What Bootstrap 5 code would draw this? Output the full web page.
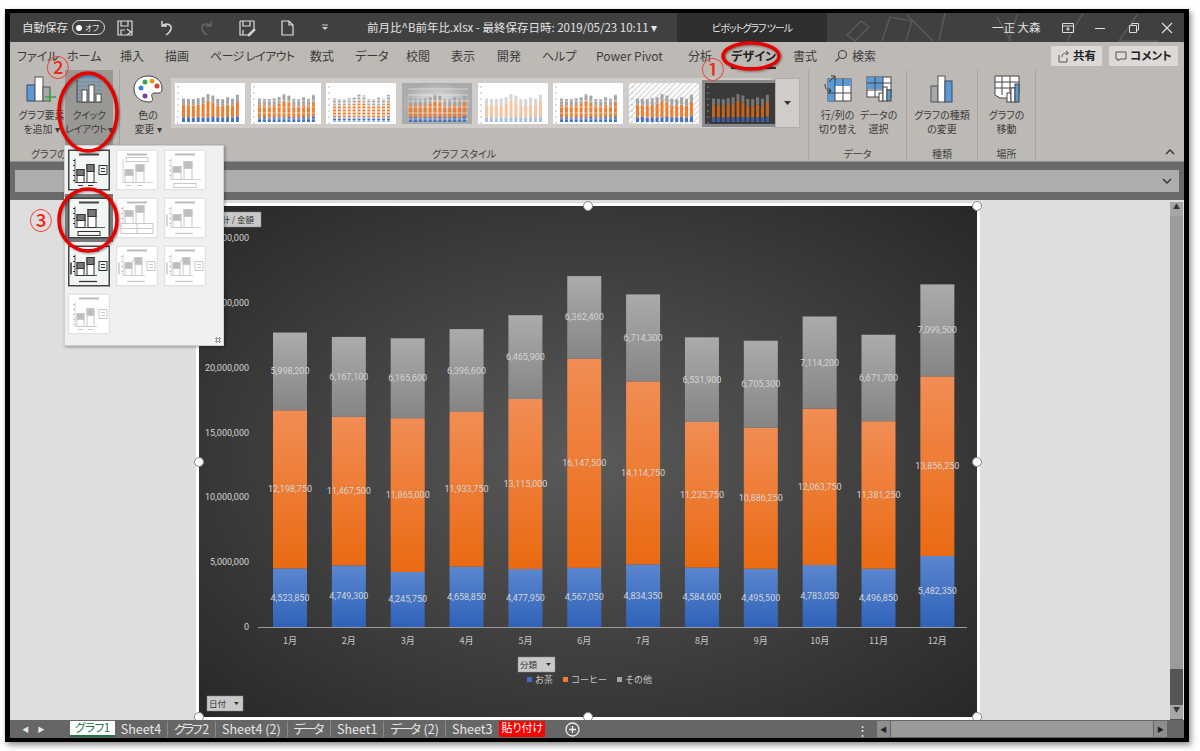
<!DOCTYPE html>
<html lang="ja">
<head>
<meta charset="UTF-8">
<title>前月比^B前年比.xlsx</title>
<link href="https://cdn.jsdelivr.net/npm/bootstrap@5.3.3/dist/css/bootstrap.min.css" rel="stylesheet">
<style>
html, body { height: 751px; overflow: hidden; background: #fff; }
body { font-family: "Noto Sans CJK JP", "Noto Sans", sans-serif; font-feature-settings: "palt"; font-size: 12px; line-height: 1.2; }
.xl-win { width: 1184px; height: 733px; margin: 9px 0 0 5px; border: solid #000; border-width: 4px 5px; box-shadow: 2px 3px 6px rgba(0,0,0,.45); position: relative; }
.xl-title { height: 29px; background: #404040; color: #e4e4e4; font-size: 11.5px; position: relative; }
.xl-title svg { display: block; }
.xl-ctx { width: 150px; height: 29px; background: #2e2e2e; font-size: 10px; letter-spacing: -1px; margin-left: 17px; }
.xl-deco { position: absolute; left: 817px; top: 0; opacity: .13; }
.xl-toggle { width: 33px; height: 15px; border: 1px solid #ddd; border-radius: 8px; font-size: 8px; padding-left: 3px; gap: 3px; }
.xl-toggle i { width: 6px; height: 6px; background: #fff; border-radius: 50%; display: block; }
.xl-tabs { height: 28px; background: #bdb9b5; color: #3c3c3c; font-size: 12px; padding-left: 7px; position: relative; }
.xl-tab-on { font-weight: 700; color: #222; position: relative; }
.xl-tab-on::after { content: ""; position: absolute; left: 0; right: 0; bottom: -5px; height: 2px; background: #333; }
.xl-tight { letter-spacing: -.7px; white-space: nowrap; }
.xl-share { height: 20px; background: #dcd9d6; color: #222; font-weight: 700; font-size: 11.5px; border-radius: 1px; gap: 3px; padding: 0 6px; }
.xl-ribbon { height: 92px; background: #bdb9b5; border-bottom: 1px solid #8f8f8f; color: #3c3c3c; }
.xl-group { border-right: 1px solid #a9a6a2; margin-bottom: 1px; position: relative; }
.xl-glabel { height: 16px; padding-top: 3px; font-size: 10px; color: #444; text-align: center; white-space: nowrap; }
.xl-gbody { height: 75px; }
.xl-btn { font-size: 10px; line-height: 14px; text-align: center; padding-top: 5px; height: 75px; color: #3c3c3c; white-space: nowrap; }
.xl-btn svg { display: block; margin: 0 auto 5px; height: 28px; }
.xl-btn-hot { background: #9a9894; letter-spacing: -.4px; }
.xl-gallery { margin-top: 8px; height: 50px; background: #cfccc9; padding: 5px 2px 4px 4px; gap: 5.7px; width: 600px; }
.xl-gallery svg { display: block; }
.xl-more { width: 25px; height: 50px; margin: 8px 0 0 4px; background: #cfccc9; border: 1px solid #b0adaa; }
.xl-fband { height: 38px; background: #6a6a6a; padding: 8px 5px 8px 5px; }
.xl-fbar { height: 22px; background: #adadad; padding-right: 6px; }
.xl-main { height: 520px; background: #dedede; position: relative; }
.xl-chart { width: 784px; height: 517px; margin-left: 186px; margin-top: 3px; border: 3px solid #fff; flex: none; position: relative; }
.xl-chart svg { display: block; }
.xl-handle { position: absolute; width: 10px; height: 10px; background: #fff; border: 1px solid #888; border-radius: 50%; }
.xl-vscroll { width: 13px; margin-right: 1px; margin-left: auto; background: #555; margin-top: 2px; }
.xl-varrow { height: 14px; background: #a6a6a6; color: #333; font-size: 7px; text-align: center; }
.xl-vthumb { height: 453px; background: #9c9c9c; }
.xl-sheets { height: 18px; background: #666; color: #e6e6e6; font-size: 12.5px; position: relative; }
.xl-sheet { padding: 0 6px; height: 16px; border-right: 1px solid #8a8a8a; white-space: nowrap; }
.xl-sheet-on { background: #fff; color: #217346; border-bottom: 2px solid #217346; border-right: 0; font-size: 11.5px; letter-spacing: -.4px; padding: 0 5px; }
.xl-sheet-red { background: #f00; color: #fff; border: 0; margin-left: 1px; font-size: 11px; padding: 0 2px; }
.xl-kana { letter-spacing: -2.2px; margin-right: 2px; }
.xl-hscroll { margin-left: auto; margin-right: 17px; height: 16px; }
.xl-harrow { width: 13px; height: 16px; background: #8e8e8e; color: #222; font-size: 7px; }
.xl-hthumb { width: 262px; background: #9a9a9a; margin: 0 1px; }
.xl-menu { position: absolute; left: 54px; top: 132px; width: 160px; height: 201px; background: #f0f0f0; border: 1px solid #cfcfcf; box-shadow: 1px 1px 3px rgba(0,0,0,.35); padding: 3px; z-index: 5; display: grid; grid-template-columns: repeat(3, 42px); grid-auto-rows: 42px; gap: 6px; }
.xl-menu svg { display: block; }
.xl-hover { outline: 3px solid #777; background: #777; }
.xl-grip { position: absolute; right: 2px; bottom: 2px; width: 6px; height: 6px; background: radial-gradient(circle, #999 1px, transparent 1.2px) 0 0 / 3px 3px; }
.xl-notes { position: absolute; left: 0; top: 0; z-index: 9; pointer-events: none; }
.xl-notes text { font-family: "Noto Sans CJK JP", sans-serif; font-size: 23px; font-weight: 500; fill: #f02a1c; text-anchor: middle; }
.ct-t { font-family: Roboto, "Liberation Sans", sans-serif; font-size: 9px; fill: #d4d4d4; }
.ct-j { font-family: "Noto Sans CJK JP", sans-serif; font-size: 9px; fill: #c8c8c8; font-feature-settings: normal; }
.ct-b { font-family: "Noto Sans CJK JP", sans-serif; font-size: 8.5px; fill: #333; }
</style>
</head>
<body>
<svg class="xl-notes" width="1200" height="751" viewBox="0 0 1200 751" fill="none">
    <defs><filter id="sh" x="-20%" y="-20%" width="140%" height="140%"><feDropShadow dx="1" dy="1" stdDeviation="1.2" flood-color="#000" flood-opacity=".45"/></filter></defs>
    <ellipse cx="751" cy="56" rx="28" ry="13" stroke="#e60000" stroke-width="3.5" filter="url(#sh)"/>
    <ellipse cx="88" cy="112" rx="29" ry="39" stroke="#e60000" stroke-width="3.5" filter="url(#sh)"/>
    <ellipse cx="88" cy="220" rx="29" ry="31" stroke="#e60000" stroke-width="3.5" filter="url(#sh)"/>
    <text x="713" y="78">①</text>
    <text x="58" y="76">②</text>
    <text x="41" y="229">③</text>
</svg>

<div class="xl-win">
    <!-- title bar -->
    <div class="xl-title d-flex align-items-center">
        <svg class="xl-deco" width="357" height="29" fill="none" stroke="#fff" stroke-width="1.5"><path d="M20 22l14-14 8 6-14 14zM55 28l8-24 22 4-6 20M80 2l26 26M112 28l6-28M170 4l14 24M190 2l-8 26M240 28l16-28M310 2l-18 26 40 0"/></svg>
        <span class="ms-2 ps-1">自動保存</span>
        <span class="xl-toggle d-flex align-items-center ms-1"><i></i>オフ</span>
        <svg style="margin-left:11px" width="18" height="18" viewBox="0 0 18 18" fill="none" stroke="#ddd" stroke-width="1.2"><path d="M2 2h14v14H2zM5 2v5h7V2M5 16v-5h4M11 10l4 3-4 3"/></svg>
        <svg style="margin-left:23px" width="18" height="18" viewBox="0 0 18 18" fill="none" stroke="#ddd" stroke-width="1.4"><path d="M5 2v5h5M5 7c5-4 10-1 9 3-.5 2-2 4-5 6"/></svg>
        <svg style="margin-left:23px" width="18" height="18" viewBox="0 0 18 18" fill="none" stroke="#666" stroke-width="1.4"><path d="M13 2v5H8M13 7C8 3 3 6 4 10c.5 2 2 4 5 6"/></svg>
        <svg style="margin-left:22px" width="18" height="18" viewBox="0 0 18 18" fill="none" stroke="#ddd" stroke-width="1.2"><path d="M2 2h14v8M2 2v14h8M5 2v5h7V2M5 16v-5M10 16l6-6 1 1-6 6z"/></svg>
        <svg style="margin-left:22px" width="18" height="18" viewBox="0 0 18 18" fill="none" stroke="#ddd" stroke-width="1.2"><path d="M4 2h7l4 4v10H4zM11 2v4h4"/></svg>
        <svg style="margin-left:25px" width="8" height="18" viewBox="0 0 8 18" fill="#ccc"><path d="M1 8h6l-3 3zM1 5.500h6v1H1z"/></svg>
        <span style="margin-left:38px;width:293px" class="text-nowrap">前月比^B前年比.xlsx&nbsp;-&nbsp;最終保存日時:&nbsp;2019/05/23 10:11&nbsp;▾</span>
        <div class="xl-ctx d-flex align-items-center justify-content-center">ピボットグラフ ツール</div>
        <span style="margin-left:165px;width:60px" class="text-nowrap">一正 大森</span>
        <svg style="margin-left:9px" width="14" height="14" viewBox="0 0 14 14" fill="none" stroke="#ddd"><path d="M1.500 2.500h11v9h-11zM1.500 5h11M5 8h4M7 6v4"/></svg>
        <svg style="margin-left:18px" width="14" height="14" viewBox="0 0 14 14" stroke="#ddd"><path d="M2 7.500h10"/></svg>
        <svg style="margin-left:20px" width="14" height="14" viewBox="0 0 14 14" fill="none" stroke="#ddd"><path d="M2.500 4.500h7v7h-7zM5 4.500V2.500h6.500V9H9.500"/></svg>
        <svg style="margin-left:19px" width="14" height="14" viewBox="0 0 14 14" stroke="#ddd" stroke-width="1.2"><path d="M2 2l10 10M12 2L2 12"/></svg>
    </div>

    <!-- ribbon tabs -->
    <div class="xl-tabs d-flex align-items-center">
        <span style="width:50px">ファイル</span>
        <span style="width:53px">ホーム</span>
        <span style="width:45px">挿入</span>
        <span style="width:45px">描画</span>
        <span style="width:100px" class="xl-tight">ページ レイアウト</span>
        <span style="width:45px">数式</span>
        <span style="width:51px">データ</span>
        <span style="width:45px">校閲</span>
        <span style="width:46px">表示</span>
        <span style="width:45px">開発</span>
        <span style="width:54px">ヘルプ</span>
        <span style="width:92px" class="text-nowrap">Power Pivot</span>
        <span style="width:43px">分析</span>
        <span style="width:62px"><span class="xl-tab-on">デザイン</span></span>
        <span style="width:41px">書式</span>
        <svg width="14" height="14" viewBox="0 0 14 14" fill="none" stroke="#444" stroke-width="1.1"><circle cx="8.500" cy="5.500" r="4"/><path d="M5.500 8.500L1.500 12.500"/></svg>
        <span class="ms-1">検索</span>
        <span class="xl-share d-flex align-items-center" style="margin-left:175px">
            <svg width="13" height="13" viewBox="0 0 13 13" fill="none" stroke="#555"><path d="M2 5v7h8V8M5 7c0-3 2-4 6-4M9 1l2.500 2L9 5"/></svg>共有
        </span>
        <span class="xl-share d-flex align-items-center" style="margin-left:7px">
            <svg width="12" height="12" viewBox="0 0 12 12" fill="none" stroke="#555"><path d="M1 2h10v7H5l-2 2V9H1z"/></svg>コメント
        </span>
    </div>

    <!-- ribbon groups -->
    <div class="xl-ribbon d-flex">
        <div class="xl-group" style="width:110px">
            <div class="xl-gbody d-flex ps-2">
                <div class="xl-btn" style="width:47px">
                    <svg width="34" height="28" viewBox="0 0 34 28"><rect x="2" y="10" width="8" height="16" fill="#5b9bd5" stroke="#446"/><rect x="10" y="2" width="8" height="24" fill="#fff" stroke="#555"/><rect x="18" y="12" width="7" height="14" fill="#a8a8a8" stroke="#555"/><path d="M25 16v11M20 22h11" stroke="#3fa34d" stroke-width="1.600"/></svg>
                    グラフ要素<br>を追加 ▾
                </div>
                <div class="xl-btn xl-btn-hot" style="width:48px">
                    <svg width="30" height="28" viewBox="0 0 30 28"><rect x="7" y="1" width="16" height="3" fill="#5b9bd5"/><path d="M2 7h26M2 11h26M2 15h26M2 19h26M2 23h26" stroke="#4f93d8"/><path d="M3 5v22h25" fill="none" stroke="#444"/><rect x="8" y="15" width="5" height="12" fill="#fff" stroke="#555"/><rect x="15" y="10" width="5" height="17" fill="#fff" stroke="#555"/><rect x="22" y="19" width="5" height="8" fill="#fff" stroke="#555"/></svg>
                    クイック<br>レイアウト ▾
                </div>
            </div>
            <div class="xl-glabel text-start" style="padding-left:21px">グラフのレイアウト</div>
        </div>
        <div class="xl-group" style="width:689px">
            <div class="xl-gbody d-flex">
                <div class="xl-btn" style="width:51px;padding-left:5px">
                    <svg width="30" height="28" viewBox="0 0 30 28"><path d="M15 1C6 1 1 7 1 14c0 8 7 13 15 13 4 0 4-3 3-5s0-4 3-4h4c2 0 3-2 3-5C29 6 23 1 15 1z" fill="#fff" stroke="#444"/><circle cx="8" cy="13" r="2.500" fill="#3f7fd0"/><circle cx="12" cy="7" r="2.500" fill="#3fa34d"/><circle cx="19" cy="6" r="2.500" fill="#e0a020"/><circle cx="24" cy="11" r="2.500" fill="#e04030"/><circle cx="12" cy="21" r="2.500" fill="#7a3fa0"/></svg>
                    色の<br>変更 ▾
                </div>
                <div class="xl-gallery d-flex" id="gallery"></div>
                <div class="xl-more d-flex align-items-center justify-content-center"><svg width="9" height="8" viewBox="0 0 9 8" fill="#333"><path d="M1 2h7L4.500 6z"/></svg></div>
            </div>
            <div class="xl-glabel">グラフ スタイル</div>
        </div>
        <div class="xl-group" style="width:98px">
            <div class="xl-gbody d-flex ps-2">
                <div class="xl-btn" style="width:41px">
                    <svg width="28" height="28" viewBox="0 0 28 28"><rect x="4" y="4" width="23" height="22" fill="#fff" stroke="#444"/><path d="M4 11h23v-7H4zM4 26h7V11H4z" fill="#5b9bd5"/><path d="M4 18h23M11 4v22M19 4v22" stroke="#444"/><path d="M1 9c0 5 3 7 6 7M5 13l2 3-3 2M5 7l6-6m-4 0h4v4" fill="none" stroke="#333"/></svg>
                    行/列の<br>切り替え
                </div>
                <div class="xl-btn" style="width:41px">
                    <svg width="28" height="28" viewBox="0 0 28 28"><rect x="2" y="2" width="24" height="20" fill="#fff" stroke="#444"/><path d="M2 2h16v12H2z" fill="#5b9bd5"/><path d="M2 8h24M2 15h24M10 2v20M18 2v20" stroke="#444"/><rect x="14" y="18" width="4" height="8" fill="#fff" stroke="#444"/><rect x="18" y="12" width="4" height="14" fill="#fff" stroke="#444"/><rect x="22" y="15" width="4" height="11" fill="#5b9bd5" stroke="#444"/></svg>
                    データの<br>選択
                </div>
            </div>
            <div class="xl-glabel">データ</div>
        </div>
        <div class="xl-group" style="width:71px">
            <div class="xl-gbody">
                <div class="xl-btn">
                    <svg width="24" height="28" viewBox="0 0 24 28"><rect x="1" y="11" width="7" height="16" fill="#a8a8a8" stroke="#555"/><rect x="8" y="1" width="7" height="26" fill="#fff" stroke="#555"/><rect x="15" y="6" width="7" height="21" fill="#5b9bd5" stroke="#446"/></svg>
                    グラフの種類<br>の変更
                </div>
            </div>
            <div class="xl-glabel">種類</div>
        </div>
        <div class="xl-group" style="width:58px">
            <div class="xl-gbody">
                <div class="xl-btn">
                    <svg width="28" height="28" viewBox="0 0 28 28"><path d="M2 1h24v18H16v4H7l-5-3z" fill="#fff" stroke="#444"/><path d="M2 7h24M2 13h24M9 1v19M17 1v18" stroke="#444"/><rect x="14" y="18" width="4" height="9" fill="#fff" stroke="#444"/><rect x="18" y="13" width="4" height="14" fill="#fff" stroke="#444"/><rect x="22" y="9" width="4" height="18" fill="#5b9bd5" stroke="#444"/></svg>
                    グラフの<br>移動
                </div>
            </div>
            <div class="xl-glabel">場所</div>
        </div>
        <div class="flex-grow-1 d-flex align-items-end justify-content-end pe-2 pb-1">
            <svg width="12" height="10" viewBox="0 0 12 10" fill="none" stroke="#333" stroke-width="1.400"><path d="M2 7l4-4 4 4"/></svg>
        </div>
    </div>

    <!-- formula bar -->
    <div class="xl-fband">
        <div class="xl-fbar d-flex align-items-center justify-content-end">
            <svg width="12" height="10" viewBox="0 0 12 10" fill="none" stroke="#333" stroke-width="1.400"><path d="M2 3l4 4 4-4"/></svg>
        </div>
    </div>

    <!-- chart sheet -->
    <div class="xl-main d-flex">
        <div class="xl-chart" id="chartbox">
            <svg id="chart" width="778" height="511" viewBox="199 206 778 511"></svg>
        </div>
        <div class="xl-vscroll">
            <div class="xl-varrow">▲</div>
            <div class="xl-vthumb"></div>
            <div style="height:36px"></div>
            <div class="xl-varrow">▼</div>
        </div>
    </div>

    <!-- sheet tabs -->
    <div class="xl-sheets d-flex align-items-center">
        <span style="width:60px;font-size:7px;padding-left:12px;word-spacing:7px">◀ ▶</span>
        <span class="xl-sheet xl-sheet-on">グラフ1</span>
        <span class="xl-sheet">Sheet4</span>
        <span class="xl-sheet"><span class="xl-kana">グラフ</span>2</span>
        <span class="xl-sheet">Sheet4 (2)</span>
        <span class="xl-sheet"><span class="xl-kana">データ</span></span>
        <span class="xl-sheet">Sheet1</span>
        <span class="xl-sheet"><span class="xl-kana">データ</span> (2)</span>
        <span class="xl-sheet border-0">Sheet3</span>
        <span class="xl-sheet xl-sheet-red">貼り付け</span>
        <svg style="margin-left:20px" width="15" height="15" viewBox="0 0 15 15" fill="none" stroke="#eee" stroke-width="1.300"><circle cx="7.500" cy="7.500" r="6.500"/><path d="M4 7.500h7M7.500 4v7"/></svg>
        <div class="xl-hscroll d-flex align-items-center">
            <span class="me-2">⋮</span>
            <span class="xl-harrow d-flex align-items-center justify-content-center">◀</span>
            <span class="xl-hthumb align-self-stretch"></span>
            <span class="xl-harrow d-flex align-items-center justify-content-center">▶</span>
        </div>
    </div>

    <!-- quick layout menu -->
    <div class="xl-menu" id="menu"><span class="xl-grip"></span></div>
</div>

<script>
// monthly values per series
const tea = [4523850,4749300,4245750,4658850,4477950,4567050,4834350,4584600,4495500,4783050,4496850,5482350];
const coffee = [12198750,11467500,11865000,11933750,13115000,16147500,14114750,11235750,10886250,12063750,11381250,13856250];
const other = [5998200,6167100,6165600,6396600,6465900,6362400,6714300,6531900,6705300,7114200,6671700,7099500];
const fmt = n => n.toLocaleString('en-US');

// main chart
let s = `<defs>
<radialGradient id="bg" cx="50%" cy="50%" r="70%"><stop offset="0" stop-color="#5a5a5a"/><stop offset="1" stop-color="#282828"/></radialGradient>
<linearGradient id="gb" x1="0" y1="0" x2="0" y2="1"><stop offset="0" stop-color="#5b86cf"/><stop offset="1" stop-color="#2f62b8"/></linearGradient>
<linearGradient id="go" x1="0" y1="0" x2="0" y2="1"><stop offset="0" stop-color="#f18d55"/><stop offset="1" stop-color="#ea6a12"/></linearGradient>
<linearGradient id="gg" x1="0" y1="0" x2="0" y2="1"><stop offset="0" stop-color="#ababab"/><stop offset="1" stop-color="#858585"/></linearGradient>
</defs><rect x="199" y="206" width="778" height="511" fill="url(#bg)"/>`;
const y0 = 627, k = 64.8 / 5000000;
for (let v = 0; v <= 6; v++) {
    s += `<text class="ct-t" x="249" y="${y0 - v * 64.8 + 3}" text-anchor="end">${fmt(v * 5000000)}</text>`;
}
s += `<path d="M258 627.500H967" stroke="#999"/>`;
tea.forEach((t, i) => {
    const x = 273 + i * 58.85, c = x + 17;
    const h1 = t * k, h2 = coffee[i] * k, h3 = other[i] * k;
    s += `<rect x="${x}" y="${y0 - h1}" width="34" height="${h1}" fill="url(#gb)"/>`;
    s += `<rect x="${x}" y="${y0 - h1 - h2}" width="34" height="${h2}" fill="url(#go)"/>`;
    s += `<rect x="${x}" y="${y0 - h1 - h2 - h3}" width="34" height="${h3}" fill="url(#gg)"/>`;
    s += `<text class="ct-t" x="${c}" y="${y0 - h1 / 2 + 3}" text-anchor="middle">${fmt(t)}</text>`;
    s += `<text class="ct-t" x="${c}" y="${y0 - h1 - h2 / 2 + 3}" text-anchor="middle">${fmt(coffee[i])}</text>`;
    s += `<text class="ct-t" x="${c}" y="${y0 - h1 - h2 - h3 / 2 + 3}" text-anchor="middle">${fmt(other[i])}</text>`;
    s += `<text class="ct-j" x="${c}" y="644" text-anchor="middle">${i + 1}月</text>`;
});
const fieldBtn = (x, y, w, label) => `<rect x="${x}" y="${y}" width="${w}" height="15" fill="#c9c9c9" stroke="#888" stroke-width=".5"/><text class="ct-b" x="${x + 2}" y="${y + 11}">${label}</text>`;
s += `<rect x="207" y="212" width="54" height="15" fill="#c9c9c9" stroke="#888" stroke-width=".5"/><text class="ct-b" x="254" y="223" text-anchor="end">合計 / 金額</text>`;
s += fieldBtn(518, 657, 37, '分類') + `<path d="M546 663h5l-2.500 3z" fill="#333"/>`;
s += fieldBtn(207, 696, 36, '日付') + `<path d="M234 702h5l-2.500 3z" fill="#333"/>`;
s += `<rect x="527" y="677" width="5" height="5" fill="#3f6fc4"/><text class="ct-j" x="535" y="683">お茶</text>`;
s += `<rect x="563" y="677" width="5" height="5" fill="#ed7d31"/><text class="ct-j" x="571" y="683">コーヒー</text>`;
s += `<rect x="617" y="677" width="5" height="5" fill="#a5a5a5"/><text class="ct-j" x="625" y="683">その他</text>`;
document.getElementById('chart').innerHTML = s;

// selection handles on the chart frame
const box = document.getElementById('chartbox');
[[0,0],[.5,0],[1,0],[0,.5],[1,.5],[0,1],[.5,1],[1,1]].forEach(([a, b]) => {
    const d = document.createElement('span');
    d.className = 'xl-handle';
    d.style.left = `calc(${a * 100}% - 5px)`;
    d.style.top = `calc(${b * 100}% - 5px)`;
    box.appendChild(d);
});

// chart style gallery
const mini = (n, w, h) => {
    const bg = ['#fff','#fff','#fff','url(#gbg)','#fff','#fff','url(#hat)','#3a3a3a'][n];
    const op = n === 4 ? .45 : 1;
    let g = `<defs><radialGradient id="gbg"><stop offset="0" stop-color="#eee"/><stop offset="1" stop-color="#aaa"/></radialGradient>
    <pattern id="hat" width="4" height="4" patternUnits="userSpaceOnUse" patternTransform="rotate(45)"><rect width="4" height="4" fill="#fff"/><rect width="2" height="4" fill="#e3e3e3"/></pattern></defs>
    <rect width="${w}" height="${h}" fill="${bg}"/>`;
    const colors = n === 7 ? ['#3a5fa5','#c9641f','#777'] : ['#4472c4','#ed7d31','#a5a5a5'];
    tea.forEach((t, i) => {
        const x = 7 + i * 4.9, f = 33 / 32000000;
        const a = t * f, b = coffee[i] * f, c = other[i] * f, base = h - 2;
        g += `<g opacity="${op}"><rect x="${x}" y="${base - a}" width="3" height="${a}" fill="${colors[0]}"/><rect x="${x}" y="${base - a - b}" width="3" height="${b}" fill="${colors[1]}"/><rect x="${x}" y="${base - a - b - c}" width="3" height="${c}" fill="${colors[2]}"/></g>`;
    });
    if (n === 1 || n === 3 || n === 5) for (let y = 6; y < h; y += 6) g += `<path d="M6 ${y}H66" stroke="#fff" stroke-width=".6" opacity=".8"/>`;
    if (n === 2) for (let y = 2; y < h; y += 3) g += `<path d="M6 ${y}H66" stroke="#fff"/>`;
    for (let y = 4; y < h; y += 6) g += `<path d="M2 ${y}h2" stroke="${n === 7 ? '#888' : '#bbb'}"/>`;
    return `<svg width="${w}" height="${h}" viewBox="0 0 ${w} ${h}" style="flex:none${n === 7 ? ';outline:3px solid #8a8a8a' : ''}">${g}</svg>`;
};
let gal = '';
for (let n = 0; n < 8; n++) gal += mini(n, 70, 41);
document.getElementById('gallery').innerHTML = gal;

// quick layout thumbnails: r=legend right, b=legend below, u=legend under title, d=data table, a=y axis title, x=x axis title, l=series lines
const layouts = ['r','u','b','b','d','ax','arx','arxl','arxl','r'];
const dark = [0, 3, 6];
let menu = '';
layouts.forEach((o, i) => {
    const on = dark.includes(i), c = on ? '#333' : '#c9c9c9', fill = on ? '#777' : '#bdbdbd';
    let m = `<rect x=".75" y=".75" width="40.500" height="39.500" fill="${on ? '#f2f7f5' : '#fff'}" stroke="${on ? '#444' : '#ddd'}" stroke-width="${on ? 1.5 : 1}"/>`;
    m += `<rect x="11" y="4" width="20" height="2" fill="${on ? '#444' : '#bbb'}"/>`;
    const right = o.includes('r') ? 29 : 37, floor = o.includes('d') ? 26 : o.includes('b') || o.includes('x') ? 30 : 33;
    const w = o.includes('r') ? 7 : 8, x1 = 9, x2 = x1 + w + 3;
    if (o.includes('u')) m += `<rect x="10" y="8" width="22" height="4" fill="none" stroke="${c}"/>`;
    if (o.includes('r')) m += `<rect x="31" y="16" width="8" height="9" fill="none" stroke="${c}"/><path d="M33 19h4M33 22h4" stroke="${c}"/>`;
    if (o.includes('b')) m += `<rect x="10" y="34" width="22" height="4" fill="none" stroke="${c}"/>`;
    if (o.includes('d')) m += `<path d="M5 ${floor}h32v10H5zM21 ${floor}v10M5 ${floor + 5}h32" fill="none" stroke="${c}"/>`;
    if (o.includes('a')) m += `<path d="M3 17v12" stroke="${c}" stroke-width="1.500"/>`;
    if (o.includes('x')) m += `<path d="M11 36h18" stroke="${c}" stroke-width="1.300"/>`;
    if (!o.includes('u')) for (let y = 11; y < floor; y += 5) m += `<path d="M5 ${y}h2" stroke="${c}"/>`;
    m += `<path d="M7 9v${floor - 9}H${right}" fill="none" stroke="${c}" stroke-width=".8"/>`;
    m += `<rect x="${x1}" y="${floor - 13}" width="${w}" height="13" fill="#fff" stroke="${c}"/><rect x="${x1}" y="${floor - 13}" width="${w}" height="6" fill="${fill}" stroke="${c}"/>`;
    m += `<rect x="${x2}" y="${floor - 18}" width="${w}" height="18" fill="#fff" stroke="${c}"/><rect x="${x2}" y="${floor - 18}" width="${w}" height="7" fill="${fill}" stroke="${c}"/>`;
    if (!o.includes('d') && !o.includes('b') && !o.includes('x')) m += `<path d="M${x1 + 1} 36h5M${x2 + 1} 36h5" stroke="${c}"/>`;
    if (o.includes('l')) m += `<path d="M${x1 + w} ${floor - 13}L${x2} ${floor - 18}" stroke="${c}"/>`;
    menu += `<svg width="42" height="42" viewBox="0 0 42 41"${i === 3 ? ' class="xl-hover"' : ''}>${m}</svg>`;
});
document.getElementById('menu').insertAdjacentHTML('afterbegin', menu);
</script>
<script src="https://cdn.jsdelivr.net/npm/bootstrap@5.3.3/dist/js/bootstrap.bundle.min.js"></script>
</body>
</html>
